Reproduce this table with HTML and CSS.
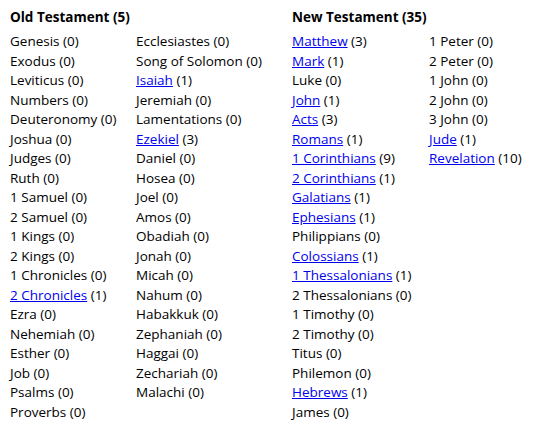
FILE: index.html
```html
<!DOCTYPE html>
<html>
<head>
<meta charset="utf-8">
<link rel="stylesheet" href="styles.css">
</head>
<body>
<div class="page">
  <section class="testament ot">
    <h2 class="title">Old Testament (5)</h2>
    <div class="cols">
      <ul class="col col-a">
        <li>Genesis (0)</li>
        <li>Exodus (0)</li>
        <li>Leviticus (0)</li>
        <li>Numbers (0)</li>
        <li>Deuteronomy (0)</li>
        <li>Joshua (0)</li>
        <li>Judges (0)</li>
        <li>Ruth (0)</li>
        <li>1 Samuel (0)</li>
        <li>2 Samuel (0)</li>
        <li>1 Kings (0)</li>
        <li>2 Kings (0)</li>
        <li>1 Chronicles (0)</li>
        <li><a href="#">2 Chronicles</a> (1)</li>
        <li>Ezra (0)</li>
        <li>Nehemiah (0)</li>
        <li>Esther (0)</li>
        <li>Job (0)</li>
        <li>Psalms (0)</li>
        <li>Proverbs (0)</li>
      </ul>
      <ul class="col">
        <li>Ecclesiastes (0)</li>
        <li>Song of Solomon (0)</li>
        <li><a href="#">Isaiah</a> (1)</li>
        <li>Jeremiah (0)</li>
        <li>Lamentations (0)</li>
        <li><a href="#">Ezekiel</a> (3)</li>
        <li>Daniel (0)</li>
        <li>Hosea (0)</li>
        <li>Joel (0)</li>
        <li>Amos (0)</li>
        <li>Obadiah (0)</li>
        <li>Jonah (0)</li>
        <li>Micah (0)</li>
        <li>Nahum (0)</li>
        <li>Habakkuk (0)</li>
        <li>Zephaniah (0)</li>
        <li>Haggai (0)</li>
        <li>Zechariah (0)</li>
        <li>Malachi (0)</li>
      </ul>
    </div>
  </section>
  <section class="testament nt">
    <h2 class="title">New Testament (35)</h2>
    <div class="cols">
      <ul class="col col-b">
        <li><a href="#">Matthew</a> (3)</li>
        <li><a href="#">Mark</a> (1)</li>
        <li>Luke (0)</li>
        <li><a href="#">John</a> (1)</li>
        <li><a href="#">Acts</a> (3)</li>
        <li><a href="#">Romans</a> (1)</li>
        <li><a href="#">1 Corinthians</a> (9)</li>
        <li><a href="#">2 Corinthians</a> (1)</li>
        <li><a href="#">Galatians</a> (1)</li>
        <li><a href="#">Ephesians</a> (1)</li>
        <li>Philippians (0)</li>
        <li><a href="#">Colossians</a> (1)</li>
        <li><a href="#">1 Thessalonians</a> (1)</li>
        <li>2 Thessalonians (0)</li>
        <li>1 Timothy (0)</li>
        <li>2 Timothy (0)</li>
        <li>Titus (0)</li>
        <li>Philemon (0)</li>
        <li><a href="#">Hebrews</a> (1)</li>
        <li>James (0)</li>
      </ul>
      <ul class="col">
        <li>1 Peter (0)</li>
        <li>2 Peter (0)</li>
        <li>1 John (0)</li>
        <li>2 John (0)</li>
        <li>3 John (0)</li>
        <li><a href="#">Jude</a> (1)</li>
        <li><a href="#">Revelation</a> (10)</li>
      </ul>
    </div>
  </section>
</div>
</body>
</html>
```
FILE: styles.css
```css
html, body {
  margin: 0;
  padding: 0;
  background: #fff;
}
body {
  font-family: "Open Sans", "Noto Sans", sans-serif;
  font-size: 13.5px;
  color: #000;
}
.page {
  display: flex;
  padding: 8px 0 0 10px;
}
.testament.ot {
  width: 282px;
}
.title {
  margin: 0 0 4.5px 0;
  font-size: 13.5px;
  font-weight: 700;
  line-height: 19.5px;
}
.cols {
  display: flex;
}
.col {
  list-style: none;
  margin: 0;
  padding: 0;
}
.col li {
  line-height: 19.5px;
  white-space: nowrap;
}
.col-a {
  width: 126px;
}
.col-b {
  width: 137px;
}
a {
  color: #0000ee;
  text-decoration: underline;
}
```
